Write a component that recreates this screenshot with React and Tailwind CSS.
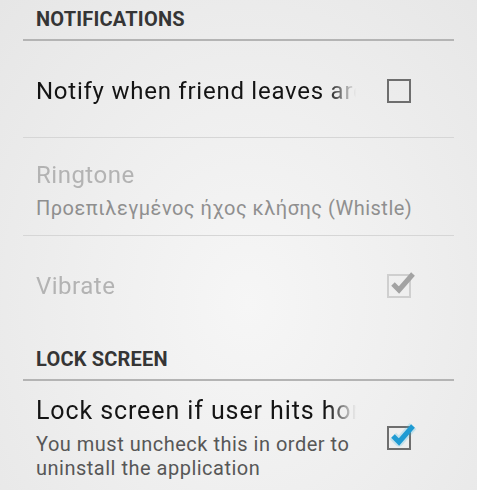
import React from 'react';

const fade = '[mask-image:linear-gradient(to_right,black_calc(100%-28px),transparent)]';

const Header = ({ title, top }) => (
  <div className={top}>
    <div className="pl-[36px] text-[20px] leading-[24px] font-bold text-[#353535] tracking-[0.2px]">{title}</div>
    <div className="mx-[23px] mt-[8px] h-[2px] bg-[#b4b4b4]" />
  </div>
);

const CheckBox = ({ checked, disabled }) => (
  <div className="relative w-[24px] h-[24px] shrink-0">
    <div
      className={`absolute inset-0 border-2 ${disabled ? 'border-[#cfcfcf]' : 'border-[#6e6e6e]'}`}
    />
    {checked && (
      <svg className="absolute left-[2px] top-[-4px]" width="28" height="26" viewBox="0 0 28 26">
        {!disabled && (
          <path d="M4 14 L10 20 L24 4" fill="none" stroke="#33b5e5" strokeOpacity="0.22" strokeWidth="9" strokeLinejoin="round" />
        )}
        <path
          d="M4 14 L10 20 L24 4"
          fill="none"
          stroke={disabled ? '#a3a3a3' : '#1f9bd3'}
          strokeWidth="5"
          strokeLinejoin="miter"
        />
      </svg>
    )}
  </div>
);

const Row = ({ title, summary, widget, disabled, className = '', titleClass = 'tracking-[0.5px]', wrap }) => (
  <div className={`flex items-center pl-[36px] ${className}`}>
    <div className={`flex-1 min-w-0 ${widget ? 'pr-[31px]' : 'pr-[23px]'}`}>
      <div
        className={`text-[24px] leading-[32px] ${titleClass} whitespace-nowrap overflow-hidden ${fade} ${
          disabled ? 'text-[#b3b3b3]' : 'text-[#141414]'
        }`}
      >
        {title}
      </div>
      {summary && (
        <div
          className={`text-[20px] leading-[24px] tracking-[0.5px] mt-[5px] ${wrap ? '' : 'whitespace-nowrap'} ${
            disabled ? 'text-[#8f8f8f]' : 'text-[#575757]'
          }`}
        >
          {summary}
        </div>
      )}
    </div>
    {widget && <div className="pr-[66px]">{widget}</div>}
  </div>
);

const Divider = () => <div className="mx-[23px] h-px bg-[#d6d6d6]" />;

export default function App() {
  return (
    <div className="w-[477px] h-[490px] overflow-hidden font-['Roboto',sans-serif] bg-[radial-gradient(ellipse_at_52%_62%,#f6f6f6_0%,#efefef_45%,#e6e6e6_100%)]">
      <Header title="NOTIFICATIONS" top="pt-[7px]" />
      <Row
        className="h-[96px] pt-[4px]"
        title="Notify when friend leaves area"
        titleClass="tracking-[0.75px]"
        widget={<CheckBox />}
      />
      <Divider />
      <Row
        className="h-[97px] pt-[6px]"
        title="Ringtone"
        summary="Προεπιλεγμένος ήχος κλήσης (Whistle)"
        disabled
      />
      <Divider />
      <Row
        className="h-[97px] pt-[2px]"
        title="Vibrate"
        disabled
        widget={<CheckBox checked disabled />}
      />
      <Header title="LOCK SCREEN" top="pt-[14px]" />
      <Row
        className="pt-[14px] items-center"
        title="Lock screen if user hits home"
        titleClass="text-[25px] tracking-[0.9px]"
        summary="You must uncheck this in order to uninstall the application"
        wrap
        widget={<CheckBox checked />}
      />
    </div>
  );
}
